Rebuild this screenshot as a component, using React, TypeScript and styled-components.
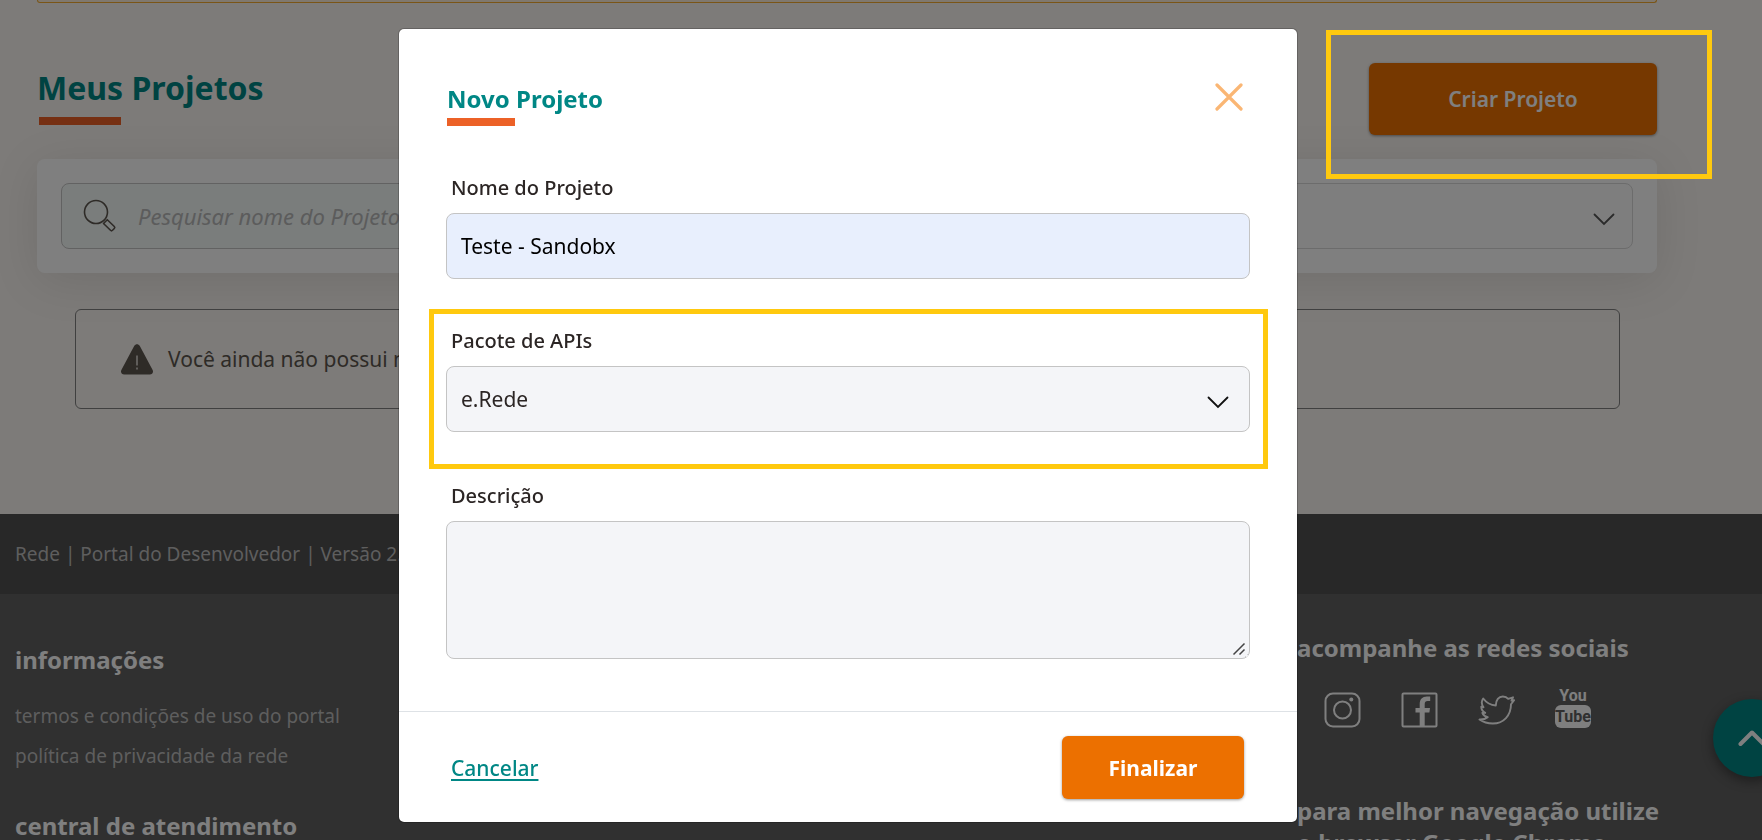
import React from 'react';
import styled, { createGlobalStyle } from 'styled-components';

const GlobalStyle = createGlobalStyle`
  *, *::before, *::after { box-sizing: border-box; }
  html, body, #root { height: 100%; }
  body {
    margin: 0;
    overflow: hidden;
    background: #faf6f2;
    color: #5d564f;
    font-family: "Noto Sans", "Open Sans", sans-serif;
  }
  h1, h2, h3, p, ul { margin: 0; padding: 0; }
  button, input, select, textarea { font-family: inherit; }
`;

const highlight = '#ffc90e';
const teal = '#008785';
const orange = '#ec7000';

/* ---------- page behind the dialog ---------- */

const Page = styled.div`
  height: 100%;
  display: flex;
  flex-direction: column;
  overflow: hidden;
`;

const Main = styled.main`
  flex: none;
  padding: 0 105px 105px 37px;
`;

const NoticeEnd = styled.div`
  height: 3px;
  background: #fff1dc;
  border: 1px solid #f5ab2e;
  border-top: 0;
  border-radius: 0 0 6px 6px;
`;

const TitleRow = styled.div`
  display: flex;
  justify-content: space-between;
  align-items: flex-start;
  padding-top: 60px;
`;

const PageTitle = styled.h1`
  font-size: 32px;
  line-height: 50px;
  color: ${teal};

  &::after {
    content: '';
    display: block;
    width: 82px;
    height: 8px;
    margin: 4px 0 0 2px;
    background: #ec6127;
  }
`;

const CreateFrame = styled.div`
  position: relative;

  &::after {
    content: '';
    position: absolute;
    z-index: 20;
    inset: -33px -55px -44px -43px;
    border: 5px solid ${highlight};
    pointer-events: none;
  }
`;

const PrimaryButton = styled.button<{ $width: number; $height: number; $strong?: boolean }>`
  display: block;
  width: ${(p) => p.$width}px;
  height: ${(p) => p.$height}px;
  padding: 0;
  border: 0;
  border-radius: 6px;
  background: ${orange};
  box-shadow: 0 1px 3px rgba(0, 0, 0, 0.4);
  color: #fff;
  font-size: 21px;
  font-weight: ${(p) => (p.$strong ? 700 : 600)};
  line-height: 30px;
`;

const FilterCard = styled.form`
  display: grid;
  grid-template-columns: 1fr 1fr;
  gap: 24px;
  margin-top: 24px;
  padding: 24px;
  border-radius: 8px;
  background: #fff;
  box-shadow: 0 8px 48px rgba(0, 0, 0, 0.1);
`;

const SearchBox = styled.label`
  display: flex;
  align-items: center;
  gap: 21px;
  height: 66px;
  padding-left: 21px;
  border: 1px solid #c4c4c4;
  border-radius: 8px;
  background: #f4faf8;
`;

const SearchInput = styled.input`
  flex: 1;
  min-width: 0;
  padding: 0;
  border: 0;
  outline: 0;
  background: transparent;
  font-size: 22px;
  line-height: 30px;
  &::placeholder { color: #b8b8b8; font-style: italic; opacity: 1; }
`;

const SelectWrap = styled.div<{ $inset: number }>`
  display: grid;
  align-items: center;
  > * { grid-area: 1 / 1; }
  > svg {
    justify-self: end;
    margin: 8px ${(p) => p.$inset}px 0 0;
    pointer-events: none;
  }
`;

const Select = styled.select<{ $plain?: boolean }>`
  appearance: none;
  width: 100%;
  height: 66px;
  padding: 0 48px 0 14px;
  border: 1px solid ${(p) => (p.$plain ? '#d8d8d8' : '#c4c4c4')};
  border-radius: 8px;
  background: ${(p) => (p.$plain ? '#fcfcfc' : '#f4f5f8')};
  color: #2b2524;
  font-size: 21px;
`;

const EmptyNotice = styled.p`
  display: flex;
  align-items: center;
  gap: 15px;
  height: 100px;
  margin: 36px 37px 0 38px;
  padding-left: 45px;
  border: 1px solid #808080;
  border-radius: 6px;
  font-size: 21px;
  line-height: 30px;
`;

const VersionBar = styled.div`
  flex: none;
  height: 80px;
  padding: 25px 15px;
  background: #505050;
  color: #bdbdbd;
  font-size: 19px;
  line-height: 30px;
`;

const Footer = styled.footer`
  flex: 1 0 auto;
  display: flex;
  justify-content: space-between;
  padding: 0 15px;
  background: #606060;
  color: #fff;
`;

const FooterColumn = styled.div`
  display: flex;
  flex-direction: column;
  padding-top: 50px;
  gap: 20px;
`;

const SocialColumn = styled.div`
  width: 450px;
  padding-top: 38px;
`;

const FooterHeading = styled.h3`
  font-size: 24px;
  line-height: 32px;
`;

const FooterLinks = styled.ul`
  list-style: none;
  margin-bottom: 14px;
  a {
    color: #bdbdbd;
    font-size: 19px;
    line-height: 40px;
    text-decoration: none;
  }
  li { height: 40px; }
`;

const SocialLinks = styled.div`
  display: flex;
  align-items: flex-end;
  gap: 40px;
  height: 65px;
  margin-bottom: 66px;
  padding-left: 27px;
  a {
    display: flex;
    align-items: flex-end;
    height: 44px;
    color: #fff;
  }
`;

const BackToTop = styled.button`
  position: fixed;
  right: -29px;
  bottom: 63px;
  width: 78px;
  height: 78px;
  padding: 0;
  border: 0;
  border-radius: 50%;
  background: ${teal};
  box-shadow: 0 4px 12px rgba(0, 0, 0, 0.4);
  display: grid;
  place-items: center;
`;

/* ---------- dialog ---------- */

const Backdrop = styled.div`
  position: fixed;
  inset: 0;
  z-index: 10;
  display: flex;
  justify-content: center;
  align-items: flex-start;
  padding: 28px 66px 0 0;
  background: rgba(0, 0, 0, 0.5);
`;

const Dialog = styled.section`
  width: 900px;
  border: 1px solid rgba(0, 0, 0, 0.2);
  border-radius: 6px;
  background: #fff;
  background-clip: padding-box;
  color: #2b2524;
`;

const DialogHeader = styled.header`
  display: flex;
  justify-content: space-between;
  align-items: flex-start;
  padding: 54px 54px 0 48px;
`;

const DialogTitle = styled.h2`
  color: ${teal};
  font-size: 24px;
  line-height: 31px;

  &::after {
    content: '';
    display: block;
    width: 68px;
    height: 8px;
    margin-top: 4px;
    background: #ec6127;
  }
`;

const CloseButton = styled.button`
  padding: 0;
  border: 0;
  background: none;
  line-height: 0;
`;

const DialogForm = styled.form`
  padding: 35px 29px 52px 30px;
`;

const Field = styled.div<{ $framed?: boolean }>`
  display: flex;
  flex-direction: column;
  padding: 0 13px 0 12px;
  border: 5px solid ${(p) => (p.$framed ? highlight : 'transparent')};
  ${(p) => (p.$framed ? 'margin-top: 30px; padding-bottom: 32px;' : 'border-top: 0; border-bottom: 0;')}
`;

const FieldLabel = styled.label`
  padding: 12px 5px 10px;
  font-size: 20px;
  font-weight: 500;
  line-height: 30px;
`;

const TextInput = styled.input`
  height: 66px;
  padding: 0 14px;
  border: 1px solid #c4c4c4;
  border-radius: 8px;
  background: #e8effd;
  color: #000;
  font-size: 21px;
`;

const TextArea = styled.textarea`
  height: 138px;
  padding: 15px;
  border: 1px solid #c4c4c4;
  border-radius: 8px;
  background: #f4f5f8;
  font-size: 21px;
  resize: both;
`;

const ResizeMark = styled.svg`
  position: absolute;
  right: 2px;
  bottom: 2px;
  pointer-events: none;
`;

const TextAreaWrap = styled.div`
  position: relative;
  display: grid;
`;

const DialogFooter = styled.footer`
  display: flex;
  justify-content: space-between;
  align-items: center;
  padding: 24px 53px 23px 52px;
  border-top: 1px solid #dee2e6;
`;

const CancelLink = styled.a`
  color: ${teal};
  font-size: 21px;
  font-weight: 500;
  line-height: 30px;
  text-decoration: underline;
  text-decoration-thickness: 2px;
  text-underline-offset: 3px;
  text-decoration-skip-ink: none;
`;

/* ---------- drawings ---------- */

const Chevron = ({ color }: { color: string }) => (
  <svg width="22" height="14" viewBox="0 0 22 14" fill="none" stroke={color} strokeWidth="1.8" strokeLinecap="round" aria-hidden>
    <path d="M1.5 1.5 11 11l9.5-9.5" />
  </svg>
);

const SearchIcon = () => (
  <svg width="34" height="34" viewBox="0 0 34 34" fill="none" stroke="#5d564f" strokeWidth="1.6" aria-hidden>
    <circle cx="13" cy="13" r="11.5" />
    <path d="M20.5 24.5l3.8-3.8 7 6.8q1 1 0 2l-1.8 1.8q-1 1-2 0z" strokeLinejoin="round" />
  </svg>
);

const WarningIcon = () => (
  <svg width="32" height="31" viewBox="0 0 32 31" aria-hidden>
    <path d="M13.3 1.8c1.2-2.1 4.2-2.1 5.4 0l12.8 24c1.3 2.3 0 4.7-2.7 4.7H3.2C.5 30.5-.8 28.1.5 25.8z" fill="#5d564f" />
    <path d="M15.2 11.5h1.6v10h-1.6zM15.2 23.5h1.6v2h-1.6z" fill="#d9d5d0" />
  </svg>
);

const InstagramIcon = () => (
  <svg width="37" height="37" viewBox="0 0 37 37" fill="none" stroke="currentColor" strokeWidth="2" aria-hidden>
    <rect x="1.5" y="1.5" width="34" height="33" rx="7.5" />
    <circle cx="18.5" cy="18" r="8.5" />
    <circle cx="27.3" cy="7.5" r="2" fill="currentColor" stroke="none" />
  </svg>
);

const FacebookIcon = () => (
  <svg width="37" height="37" viewBox="0 0 37 37" aria-hidden>
    <rect x="1.5" y="1.5" width="34" height="33" rx="1" fill="none" stroke="currentColor" strokeWidth="2" />
    <path d="M18.7 34.5V20.5h-4.2v-4.500h4.200v-4c0-4.800 2.700-7.600 7.200-7.600h3.300V9h-2.600c-2 0-2.900 1-2.900 2.900v4.100h5.300l-.6 4.500h-4.700v14z" fill="currentColor" />
  </svg>
);

const TwitterIcon = () => (
  <svg width="37" height="37" viewBox="0 0 37 37" fill="none" stroke="currentColor" strokeWidth="1.9" strokeLinejoin="round" aria-hidden>
    <path d="M1.500 27.500c3.800.2 6-.5 8.200-2.300-3.200-.8-4.600-2.200-5.300-4.300h2.800c-2.500-1.500-3.900-3.300-3.900-6.200l2.200.6C3.500 12.500 3.200 9.300 5.200 6.500c3.300 4.400 7.500 6.600 12.600 7 0-5.500 3-9 7-9 2.400 0 4.100.8 5.400 2.400l4.800-1.600-1.500 3.300 2.600-.4-3.100 4.100c0 11-7.300 19.200-18.200 19.200-5.400 0-9.800-1.500-13.300-4z" />
  </svg>
);

const LogoText = styled.text`
  font-family: 'Liberation Sans Narrow', Roboto, sans-serif;
  font-size: 16px;
  font-weight: 700;
  text-anchor: middle;
`;

const YoutubeIcon = () => (
  <svg width="37" height="44" viewBox="0 0 37 44" aria-hidden>
    <LogoText x="18" y="16" fill="currentColor">You</LogoText>
    <rect x="0" y="20" width="36" height="23" rx="6" fill="currentColor" />
    <LogoText x="18" y="37" fill="#606060">Tube</LogoText>
  </svg>
);

export default function App() {
  return (
    <>
      <GlobalStyle />
      <Page>
        <Main>
          <NoticeEnd />
          <TitleRow>
            <PageTitle>Meus Projetos</PageTitle>
            <CreateFrame>
              <PrimaryButton type="button" $width={288} $height={72}>Criar Projeto</PrimaryButton>
            </CreateFrame>
          </TitleRow>
          <FilterCard>
            <SearchBox>
              <SearchIcon />
              <SearchInput type="text" placeholder="Pesquisar nome do Projeto" aria-label="Pesquisar nome do Projeto" />
            </SearchBox>
            <SelectWrap $inset={18}>
              <Select $plain aria-label="Filtro" defaultValue="">
                <option value="" />
              </Select>
              <Chevron color="#555" />
            </SelectWrap>
          </FilterCard>
          <EmptyNotice>
            <WarningIcon />
            Você ainda não possui nenhum projeto
          </EmptyNotice>
        </Main>
        <VersionBar>Rede | Portal do Desenvolvedor | Versão 2.0</VersionBar>
        <Footer>
          <FooterColumn>
            <FooterHeading>informações</FooterHeading>
            <FooterLinks>
              <li><a href="#termos">termos e condições de uso do portal</a></li>
              <li><a href="#privacidade">política de privacidade da rede</a></li>
            </FooterLinks>
            <FooterHeading>central de atendimento</FooterHeading>
          </FooterColumn>
          <SocialColumn>
            <FooterHeading>acompanhe as redes sociais</FooterHeading>
            <SocialLinks>
              <a href="#instagram" aria-label="Instagram"><InstagramIcon /></a>
              <a href="#facebook" aria-label="Facebook"><FacebookIcon /></a>
              <a href="#twitter" aria-label="Twitter"><TwitterIcon /></a>
              <a href="#youtube" aria-label="YouTube"><YoutubeIcon /></a>
            </SocialLinks>
            <FooterHeading>para melhor navegação utilize<br />o browser Google Chrome</FooterHeading>
          </SocialColumn>
        </Footer>
      </Page>
      <BackToTop type="button" aria-label="Voltar ao topo">
        <svg width="28" height="18" viewBox="0 0 28 18" fill="none" stroke="#fff" strokeWidth="4" strokeLinecap="round" strokeLinejoin="round" aria-hidden>
          <path d="M2.500 15 14 3.500 25.500 15" />
        </svg>
      </BackToTop>

      <Backdrop>
        <Dialog role="dialog" aria-modal="true" aria-labelledby="dialog-title">
          <DialogHeader>
            <DialogTitle id="dialog-title">Novo Projeto</DialogTitle>
            <CloseButton type="button" aria-label="Fechar">
              <svg width="28" height="28" viewBox="0 0 28 28" stroke="#fab674" strokeWidth="3.200" strokeLinecap="round" aria-hidden>
                <path d="M2 2l24 24M26 2L2 26" />
              </svg>
            </CloseButton>
          </DialogHeader>
          <DialogForm>
            <Field>
              <FieldLabel htmlFor="nome">Nome do Projeto</FieldLabel>
              <TextInput id="nome" type="text" defaultValue="Teste - Sandobx" />
            </Field>
            <Field $framed>
              <FieldLabel htmlFor="pacote">Pacote de APIs</FieldLabel>
              <SelectWrap $inset={21}>
                <Select id="pacote" defaultValue="erede">
                  <option value="erede">e.Rede</option>
                </Select>
                <Chevron color="#111" />
              </SelectWrap>
            </Field>
            <Field>
              <FieldLabel htmlFor="descricao">Descrição</FieldLabel>
              <TextAreaWrap>
                <TextArea id="descricao" />
                <ResizeMark width="16" height="16" viewBox="0 0 16 16" fill="none" stroke="#444" strokeWidth="1.5" aria-hidden>
                  <rect width="16" height="16" rx="4" fill="#f4f5f8" stroke="none" />
                  <path d="M1.500 13.500l11-11M7.500 13.500l5-5" />
                </ResizeMark>
              </TextAreaWrap>
            </Field>
          </DialogForm>
          <DialogFooter>
            <CancelLink href="#cancelar">Cancelar</CancelLink>
            <PrimaryButton type="button" $width={182} $height={63} $strong>Finalizar</PrimaryButton>
          </DialogFooter>
        </Dialog>
      </Backdrop>
    </>
  );
}
